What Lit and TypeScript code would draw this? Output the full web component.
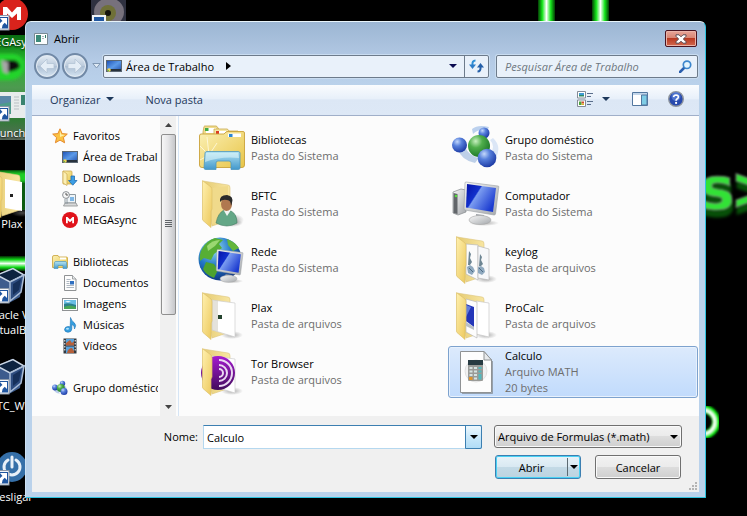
import { LitElement, html, svg, css } from "lit";
import { customElement } from "lit/decorators.js";
import { classMap } from "lit/directives/class-map.js";

/* ---------- shared gradients ---------- */
const defs = svg`<defs>
  <linearGradient id="fold" x1="0" y1="0" x2="1" y2="1"><stop offset="0" stop-color="#fff0ae"/><stop offset="1" stop-color="#ecc85c"/></linearGradient>
  <linearGradient id="back" x1="0" y1="0" x2="1" y2="0"><stop offset="0" stop-color="#e5cb72"/><stop offset="1" stop-color="#f8e6a2"/></linearGradient>
  <linearGradient id="lib" x1="0" y1="0" x2="1" y2="1"><stop offset="0" stop-color="#fbf0b4"/><stop offset="1" stop-color="#e8c548"/></linearGradient>
  <linearGradient id="aqua" x1="0" y1="0" x2="0" y2="1"><stop offset="0" stop-color="#b5e4f2"/><stop offset="1" stop-color="#4298cc"/></linearGradient>
  <linearGradient id="screen" x1="0" y1="0" x2="1" y2=".6"><stop offset="0" stop-color="#0512a8"/><stop offset=".4" stop-color="#1230cc"/><stop offset=".44" stop-color="#7b9cf0"/><stop offset="1" stop-color="#1b3bd0"/></linearGradient>
  <linearGradient id="metal" x1="0" y1="0" x2="1" y2="1"><stop offset="0" stop-color="#f8f8f8"/><stop offset="1" stop-color="#a4a8ac"/></linearGradient>
  <radialGradient id="blue" cx=".35" cy=".28" r=".75"><stop offset="0" stop-color="#c3d8fb"/><stop offset=".4" stop-color="#5780dc"/><stop offset="1" stop-color="#1c3aa4"/></radialGradient>
  <radialGradient id="green" cx=".35" cy=".28" r=".75"><stop offset="0" stop-color="#c8f0c0"/><stop offset=".4" stop-color="#4fae4b"/><stop offset="1" stop-color="#1c7628"/></radialGradient>
  <radialGradient id="sea" cx=".35" cy=".25" r=".8"><stop offset="0" stop-color="#9fe3f8"/><stop offset=".5" stop-color="#2479c8"/><stop offset="1" stop-color="#0c2f7c"/></radialGradient>
  <radialGradient id="shade"><stop offset="0" stop-color="#777" stop-opacity=".6"/><stop offset="1" stop-color="#777" stop-opacity="0"/></radialGradient>
  <linearGradient id="tor" x1="0" y1="0" x2="0" y2="1"><stop offset="0" stop-color="#a51bd0"/><stop offset="1" stop-color="#420b5c"/></linearGradient>
  <linearGradient id="desk" x1="0" y1="0" x2="1" y2="1"><stop offset="0" stop-color="#1c4fb4"/><stop offset=".5" stop-color="#5b9ae8"/><stop offset="1" stop-color="#1d4aa8"/></linearGradient>
</defs>`;

const openFolder = (inside: unknown) => svg`
  <ellipse cx="34" cy="43" rx="11" ry="4" fill="url(#shade)"/>
  <path d="M5 1 L30 5 Q32 5 32 8 V40 L14 46Z" fill="url(#back)" stroke="#dcc57c" stroke-width=".6"/>
  ${inside}
  <path d="M4.500 .6 L13 7 Q14 8 14 10 V29 L13 31 V47.500 L5 40.500 Q4.500 40 4.500 39Z" fill="url(#fold)" stroke="#dcc069" stroke-width=".7"/>`;

const whiteSheet = svg`<path d="M14 8 L37 11 V45 L14 38Z" fill="#fff" stroke="#cfcfcf" stroke-width=".7"/>
  <path d="M14 8.500 h6 v31 l-6-1.500z" fill="#c9c5b8" opacity=".5"/>`;

const monitor = svg`
  <ellipse cx="32" cy="43" rx="15" ry="3" fill="url(#shade)"/>
  <path d="M24 34 l8 1 1 5 h-9z" fill="#9fa4a9"/>
  <ellipse cx="28" cy="40" rx="11" ry="4.500" fill="url(#metal)" stroke="#a6a6a6" stroke-width=".6"/>
  <path d="M14 2 L46 6 Q47 6 46.800 7 L43.500 34 Q43.300 35 42 35 L13 30 Q12 30 12 28 L13 3 Q13 2 14 2Z" fill="url(#metal)" stroke="#9b9fa3" stroke-width=".6"/>
  <path d="M15 4 L44 8 L41 32 L14 27.500Z" fill="url(#screen)"/>`;

const big: Record<string, unknown> = {
  libraries: svg`
    <path d="M5 8 L6 2.500 Q6.300 2 7 2 H18 Q19 2 20 4 L22 7 H40 V20 H5Z" fill="#f1dc8e" stroke="#c9a94c" stroke-width=".8"/>
    <path d="M8 4 h10 v5 h-10z" fill="#fff"/><path d="M7 4 h3.500 v3 h-3.500z" fill="#42ab43"/>
    <path d="M16 5 H29 Q30 5 31 7 L33 9 H45 V20 H16Z" fill="#f6e6a5" stroke="#c9a94c" stroke-width=".8"/>
    <rect x="18" y="7" width="10" height="5" fill="#fff"/><rect x="18" y="7" width="3" height="3" fill="#dc3b22"/>
    <path d="M1.500 12 Q1.500 10 3 10 H26 L28 8 Q29 7.500 30 7.500 H45 Q46.500 7.500 46.500 9 V41 Q46.500 43.500 44 43.500 H4 Q1.500 43.500 1.500 41Z" fill="url(#lib)" stroke="#c9a23a" stroke-width=".9"/>
    <rect x="30" y="9.500" width="13" height="3.500" fill="#fff"/><rect x="31" y="10" width="3.500" height="3" fill="#2b86d4"/>
    <path d="M11 31 L2 22 M11 31 L9 13 M11 31 L19 19 M11 31 L2 36" stroke="#fffbe4" stroke-width=".8"/>
    <path d="M7 29 Q7 27.500 9 27.500 H40 Q42 27.500 42 29 V44 Q42 45.500 40 45.500 H33 V39 Q33 37 31 37 H20 Q18 37 18 39 V45.500 H8 Q6 45.500 6 44Z" fill="url(#aqua)" stroke="#4c97bf" stroke-width=".8"/>
    <path d="M8 29 h32 l1 5 q-18-2-34 4z" fill="#e2f7fc" opacity=".55"/>`,
  user: openFolder(svg`
    <path d="M14 8 L30 6 V39 L14 44Z" fill="#f0da8b"/>
    <ellipse cx="36" cy="40" rx="10" ry="6" fill="url(#shade)"/>
    <path d="M18 43 Q20 33 26 30 L33 31 Q39 34 39 43 Q29 49 18 43Z" fill="#64a787" stroke="#3f7a60" stroke-width=".6"/>
    <path d="M25 29 l4 7 4-6z" fill="#f4f4f4"/>
    <ellipse cx="28.500" cy="24" rx="5.500" ry="7" fill="#b0784f"/>
    <path d="M22 22 Q21 15 29 15 Q36 16 34 23 L33 26 Q33 20 29 20 Q24 19 22 22Z" fill="#2b2b2b"/>`),
  network: svg`
    <circle cx="22" cy="23" r="21.500" fill="url(#sea)"/>
    <path d="M4 13 Q8 5 17 2 L25 4 L21 8 L24 12 L16 18 L13 24 L6 22 L2 25 Q1 18 4 13Z" fill="#57ae35"/>
    <path d="M8 26 L16 28 L20 34 L16 42 Q8 39 5 33Z" fill="#4da22e"/>
    <path d="M29 3 Q37 6 41 12 L35 15 L30 9Z" fill="#63b63c"/>
    <path d="M9 10 Q14 4 22 4 L17 10 L10 15Z" fill="#c8f49a" opacity=".6"/>
    <g transform="translate(9 12) scale(.77)">${monitor}</g>`,
  plain: openFolder(svg`${whiteSheet}<rect x="20" y="23" width="4" height="4" fill="#24442e"/>`),
  tor: openFolder(svg`${whiteSheet}
    <circle cx="20" cy="25" r="17" fill="url(#tor)"/>
    <g fill="none" stroke="#ead9f2" stroke-width="2"><path d="M21 12 a13 13 0 0 1 0 26"/><path d="M21 17 a8 8 0 0 1 0 16"/><path d="M21 21 a4 4 0 0 1 0 8"/></g>`),
  homegroup: svg`
    <path d="M20 5 Q26 0 37 3 L35 7 Q27 4 21 10Z" fill="#bcd1ee"/>
    <path d="M41 14 Q50 22 44 34 L38 31 Q44 22 38 16Z" fill="#dbe6f6"/>
    <path d="M6 25 Q9 36 23 39 L27 34 Q17 32 13 23Z" fill="#a9c1e2" opacity=".75"/>
    <circle cx="32" cy="9" r="5.500" fill="url(#blue)"/>
    <circle cx="7.500" cy="21" r="7.500" fill="url(#blue)"/>
    <circle cx="27" cy="22" r="11" fill="url(#green)"/>
    <circle cx="35" cy="34" r="9.300" fill="url(#blue)"/>`,
  computer: svg`
    <path d="M1 12 L9 9 L14 10 V32 L6 35 L1 33Z" fill="url(#metal)" stroke="#85898d" stroke-width=".7"/>
    <path d="M1.500 13 L5.500 14 V34 L1.500 33Z" fill="#62666a"/><circle cx="4" cy="16" r="1.300" fill="#57e03c"/>
    ${monitor}`,
  pages: openFolder(svg`
    <path d="M14 8 L26 9 V44 L14 38Z" fill="#fbfbfb" stroke="#b9b9b9" stroke-width=".7"/>
    <path d="M26 10 L37 13 V44 L26 42Z" fill="#f7f8fa" stroke="#b9b9b9" stroke-width=".7"/>
    <path d="M17 15 l2 3 -1 4 2 4 -2 3 h-2z M28 18 l2 3 -1 3 2 4 -2 2 h-2z" fill="#6d8593"/>
    <path d="M15 31 l3-2 3 2 2 4 -3 4 -4-2z M26 31 l3-1 3 2 1 4 -3 3 -4-2z" fill="#8fa9bf"/>
    <path d="M17 32 l4 4 M27 32 l4 4" stroke="#4d6a82"/>`),
  calc: openFolder(svg`
    <path d="M24 9 L37 11 V45 L24 42Z" fill="#fff" stroke="#c9c9c9" stroke-width=".7"/>
    <path d="M14 7 L25 10 V46 L14 40Z" fill="#fdfdfd" stroke="#b9b9b9" stroke-width=".7"/>
    <path d="M14 12 L22 15 V35 L14 29Z" fill="#2436b8"/><path d="M14 13 L19 15 L14 25Z" fill="#7f9bea" opacity=".7"/><path d="M14 30 l8 5 v3 l-8-4z" fill="#b9bfc6"/>`),
  file: svg`
    <path d="M8.500 3.500 H32 L39.500 12 V44.500 H8.500Z" fill="#fdfdfd" stroke="#8f9294"/>
    <path d="M10 45.500 H40.500 V13" fill="none" stroke="#7d848b" opacity=".7"/>
    <path d="M32 3.500 V12 H39.500Z" fill="#e7eaec" stroke="#8f9294"/>
    <circle cx="24" cy="23" r="11" fill="#f2f2f2" stroke="#dcdcdc" stroke-width=".8"/>
    <rect x="16" y="13" width="15" height="20" rx="1" fill="#9a9b98"/>
    <rect x="16" y="12" width="15" height="5" fill="#283b42"/>
    <g fill="#d7e3e2"><path d="M17.500 19h3v2h-3z M22 19h3v2h-3z M17.500 22.500h3v2h-3z M22 22.500h3v2h-3z M17.500 26h3v2h-3z M22 26h3v2h-3z M22 29.500h3v2h-3z"/></g>
    <path d="M26.500 19h3v2h-3z M26.500 22.500h3v2h-3z M26.500 26h3v5.500h-3z" fill="#53b9bd"/>
    <rect x="17" y="29" width="3.500" height="3" fill="#e0952c"/>`,
};

const small: Record<string, unknown> = {
  star: svg`<path d="M8 .8 L10.100 5.600 L15.300 6.100 L11.400 9.600 L12.600 14.800 L8 12.100 L3.400 14.800 L4.600 9.600 L.7 6.100 L5.900 5.600Z" fill="#fbc343" stroke="#e58a2e" stroke-width="1"/><path d="M8 3 L9.200 6.500 L13 7 L8 9Z" fill="#fff0a8"/>`,
  desktop: svg`<rect x=".5" y="2.500" width="15" height="11" fill="url(#desk)" stroke="#5b6773"/><path d="M1 11h14v2h-14z" fill="#27323d"/><circle cx="3" cy="12" r="1.800" fill="#f0d458"/><path d="M1.500 12h1.500v1.500z" fill="#45c04b"/>`,
  downloads: svg`<path d="M1 1 H9 Q10 1 10 2 V14 H1Z" fill="url(#lib)" stroke="#cda94f" stroke-width=".8"/><path d="M1 1 L5 4 V15.500 L1 13Z" fill="#fbefb4" stroke="#cda94f" stroke-width=".7"/><path d="M9 6 H12.500 V10.500 H15 L10.800 15.200 L6.500 10.500 H9Z" fill="#3c9ee4" stroke="#1f6db4" stroke-width=".8"/>`,
  recent: svg`<path d="M5 3.500 H13.500 V12 H5Z" fill="#eef4f8" stroke="#8d989f"/><path d="M8 6h4v4h-4z" fill="#7db6e6"/><path d="M3 12 H14 L15.500 15 H1.500Z" fill="#d7d9da" stroke="#8d8f91" stroke-width=".8"/><path d="M3 8 v4 h3" fill="none" stroke="#8d989f"/><circle cx="4" cy="4" r="3.400" fill="#f7f7f7" stroke="#8b8f94"/><path d="M4 2v2h2" fill="none" stroke="#555"/>`,
  mega: svg`<circle cx="8" cy="8" r="8" fill="#e0131b"/><path d="M4 11.200 V5 H5.500 L8 7.600 L10.500 5 H12 V11.200 H10.200 V8.200 L8 10.300 L5.800 8.200 V11.200Z" fill="#fff"/>`,
  library: svg`<path d="M.5 3 Q.5 1.500 2 1.500 H6 L7 3 H14.500 Q15.500 3 15.500 4 V13.500 H.5Z" fill="url(#lib)" stroke="#c9a23a" stroke-width=".8"/><path d="M8 3.500h6v2h-6z" fill="#fff"/><path d="M2.500 8.500 Q2.500 7.500 4 7.500 H13 Q14.500 7.500 14.500 8.500 L15 14.500 H11 V11.500 H6 V14.500 H2Z" fill="url(#aqua)" stroke="#4c97bf" stroke-width=".7"/>`,
  documents: svg`<path d="M2.500 .5 H10.500 L14 4 V15.500 H2.500Z" fill="#fdfdfd" stroke="#8f9294"/><path d="M10.500 .5 V4 H14" fill="#e6e9eb" stroke="#8f9294" stroke-width=".8"/><path d="M4.500 4.500h4M4.500 6.500h3M4.500 8.500h3M4.500 10.500h7.500M4.500 12.500h7.500" stroke="#9aa6b2" stroke-width=".8"/><path d="M8 6h4v3.500h-4z" fill="#2f6fc0"/>`,
  pictures: svg`<rect x=".5" y="2.500" width="15" height="12" fill="#fff" stroke="#8f9294"/><path d="M2 4h12v9h-12z" fill="#69bde4"/><path d="M2 8 q4 -2 12 1 v4 h-12z" fill="#2c7f8c"/><path d="M2 11 q6-3 12 0 v2 h-12z" fill="#49a657"/><path d="M3 5h6l-3 1.500z" fill="#e9f7fd"/>`,
  music: svg`<path d="M8.500 .5 Q9.500 4 12 5.500 Q15 8 12.500 12 Q13 8.500 9.800 7.500 V12 Q9.500 15.300 6 15.300 Q2.500 15 2.500 12.500 Q3 9.500 6 9.500 Q7.500 9.400 8.200 10Z" fill="#359ede" stroke="#1c74b6" stroke-width=".6"/><ellipse cx="5.500" cy="11.800" rx="1.500" ry="1" fill="#b4e2fa"/>`,
  videos: svg`<path d="M1.500 .5h13v15h-13z" fill="#333a40"/><path d="M4 1h8v6.500h-8z M4 8.500h8v6.500h-8z" fill="#57a2dc"/><path d="M4 5 l4-3 2 3 2-2 v4.500h-8z M5 15 q1-5 5-5 l2 3 v2z" fill="#b5603a"/><path d="M2.300 2h1v1.500h-1z M2.300 5h1v1.500h-1z M2.300 8h1v1.500h-1z M2.300 11h1v1.500h-1z M12.700 2h1v1.500h-1z M12.700 5h1v1.500h-1z M12.700 8h1v1.500h-1z M12.700 11h1v1.500h-1z" fill="#fff"/>`,
  group: svg`<path d="M1 9 Q4 14 8 13.500 L4 8Z M12 5 q4 3 2.500 7l-3-2z" fill="#b9cdea"/><circle cx="10.500" cy="3.500" r="2.700" fill="url(#blue)"/><circle cx="3" cy="7.500" r="2.900" fill="url(#blue)"/><circle cx="8.800" cy="8" r="4" fill="url(#green)"/><circle cx="12" cy="11.500" r="3.500" fill="url(#blue)"/>`,
};

const arrowBadge = svg`<rect x="7.500" y="27.500" width="13.500" height="14.500" fill="#f3f6fa" stroke="#8b98a8"/>
  <path d="M9 29h11v11.500h-11z" fill="#1f559f"/><path d="M12 30 h7 v7 l-2.300-2.300 q-3 2-2.700 5.800 h-3.500 q0-5 4-7.500z" fill="#fff"/>`;
const cube = svg`<path d="M24 7 L35 13 L32 36 L21 42 L10 33 L9 14Z" fill="#3d5c8d"/>
  <path d="M9 14 L25 7.500 L36 14 L22 21Z" fill="#0d2340" stroke="#cbd7e6" stroke-width="1.500"/>
  <path d="M22 21 L36 14 L33 31 L22 40Z" fill="#2e4d80" stroke="#a9bcd6" stroke-width="1.500"/>
  <path d="M25 23 L33 18 L31 29 L25 34Z" fill="#16305a"/>`;

const desktop: Record<string, unknown> = {
  mega: svg`<circle cx="24" cy="26" r="16" fill="#d9231c"/><path d="M15 32 V19 H19 L24 24.500 L29 19 H33 V32 H29 V25.500 L24 30 L19 25.500 V32Z" fill="#fff"/>${arrowBadge}`,
  launch: svg`<rect x="0" y="13" width="48" height="26" fill="#e8ecec"/><rect x="2" y="17" width="21" height="18" fill="#4d9b8b"/><path d="M2 17h21v6l-21 4z" fill="#5a88a8"/><path d="M26 18h5M26 21h5M26 24h5M26 27h5M26 30h5" stroke="#b9c0c4"/><rect x="33" y="16" width="10" height="10" fill="#39836f"/>${arrowBadge}`,
  folder: svg`${openFolder(svg`<path d="M17 9 L34 12 V41 L17 38Z" fill="#fff"/><rect x="22" y="24" width="3" height="3" fill="#222"/>`)}`,
  vbox: svg`${cube}${arrowBadge}`,
  power: svg`<circle cx="24" cy="24" r="15" fill="#356fa8"/><path d="M20 17 a8 8 0 1 0 8 0 M24 14 v10" fill="none" stroke="#e8f0f8" stroke-width="3" stroke-linecap="round"/>${arrowBadge}`,
};

const shortcuts = [
  ["mega", "MEGAsync"],
  ["launch", "Launcher"],
  ["folder", "Plax"],
  ["vbox", "Oracle VM VirtualBox"],
  ["vbox", "BTC_Win"],
  ["power", "Desligar"],
];

const places = [
  { title: "Favoritos", icon: "star", items: [["desktop", "Área de Trabalho"], ["downloads", "Downloads"], ["recent", "Locais"], ["mega", "MEGAsync"]] },
  { title: "Bibliotecas", icon: "library", items: [["documents", "Documentos"], ["pictures", "Imagens"], ["music", "Músicas"], ["videos", "Vídeos"]] },
  { title: "Grupo doméstico", icon: "group", items: [] as string[][] },
];

const files = [
  ["libraries", "Bibliotecas", "Pasta do Sistema"],
  ["homegroup", "Grupo doméstico", "Pasta do Sistema"],
  ["user", "BFTC", "Pasta do Sistema"],
  ["computer", "Computador", "Pasta do Sistema"],
  ["network", "Rede", "Pasta do Sistema"],
  ["pages", "keylog", "Pasta de arquivos"],
  ["plain", "Plax", "Pasta de arquivos"],
  ["calc", "ProCalc", "Pasta de arquivos"],
  ["tor", "Tor Browser", "Pasta de arquivos"],
  ["file", "Calculo", "Arquivo MATH", "20 bytes"],
];

const caret = html`<svg class="caret" viewBox="0 0 8 4" width="8" height="4" aria-hidden="true"><path d="M0 0h8l-4 4z" fill="currentColor"/></svg>`;
const icon = (art: unknown, size: number) =>
  html`<svg class="icon" viewBox="0 0 ${size} ${size}" width=${size} height=${size} aria-hidden="true">${defs}${art}</svg>`;

@customElement("desktop-wallpaper")
class DesktopWallpaper extends LitElement {
  static styles = css`
    :host { position: absolute; inset: 0; display: flex; justify-content: space-between; overflow: hidden; background: #000; }
    svg { display: block; flex: none; }
    .glyphs { font: bold 58px "DejaVu Sans", sans-serif; filter: blur(1px) drop-shadow(1px 7px 1px #075008); }
  `;
  render() {
    return html`
      <svg width="130" height="516" viewBox="0 0 130 516" aria-hidden="true">
        <defs>
          <linearGradient id="beam" x1="0" y1="0" x2="0" y2="1"><stop offset="0" stop-color="#022b04"/><stop offset=".25" stop-color="#12dc18"/><stop offset=".5" stop-color="#f0fff0"/><stop offset=".75" stop-color="#12dc18"/><stop offset="1" stop-color="#022b04"/></linearGradient>
          <linearGradient id="slab" x1="0" y1="0" x2="0" y2="1"><stop offset="0" stop-color="#0a6a12"/><stop offset=".25" stop-color="#26b82c"/><stop offset=".5" stop-color="#4d9a50"/><stop offset=".8" stop-color="#2f7c34"/><stop offset="1" stop-color="#5b6a5c"/></linearGradient>
          <filter id="soft"><feGaussianBlur stdDeviation="1.500"/></filter>
        </defs>
        <rect x="-4" y="35" width="34" height="105" fill="url(#slab)"/>
        <g filter="url(#soft)"><path d="M-4 54 H14 Q24 56 24 67 Q22 80 8 80 H-4Z" fill="#22d42a"/><path d="M4 60 H14 Q20 62 20 67 Q17 71 7 72Z" fill="#0a0a0a"/><path d="M1 60 L8 62 L8 74 L3 72Z" fill="#a8a8a8"/></g>
        <rect x="-4" y="170" width="34" height="40" fill="#0a5c10"/>
        <rect x="-4" y="172" width="34" height="10" fill="#1fcf26" filter="url(#soft)"/>
        <rect x="-4" y="256" width="34" height="15" fill="url(#beam)"/>
        <rect x="91" y="0" width="35" height="22" fill="#2f3140"/>
        <ellipse cx="109" cy="12" rx="15" ry="14" fill="#77717c"/><circle cx="108" cy="13" r="8" fill="#6f7038"/><circle cx="108" cy="13" r="3" fill="#15150f"/>
        <rect x="92" y="15" width="14" height="8" fill="#f0f4f8"/><path d="M94 17h10v6h-10z" fill="#1f559f"/>
      </svg>
      <svg width="217" height="516" viewBox="530 0 217 516" aria-hidden="true">
        <defs>
          <linearGradient id="ray"><stop offset="0" stop-color="#033c04"/><stop offset=".25" stop-color="#14e61a"/><stop offset=".5" stop-color="#fff"/><stop offset=".75" stop-color="#14e61a"/><stop offset="1" stop-color="#033c04"/></linearGradient>
          <filter id="blur"><feGaussianBlur stdDeviation="1"/></filter>
        </defs>
        <rect x="538" y="0" width="17" height="26" fill="url(#ray)"/>
        <rect x="592" y="0" width="17" height="26" fill="url(#ray)"/>
        <text class="glyphs" x="700 730" y="209" fill="#32e236" stroke="#7c8c7c" stroke-width="1">s&gt;</text>
        <g fill="none" filter="url(#blur)"><circle cx="703" cy="422" r="13" stroke="#12ec14" stroke-width="8"/><circle cx="703" cy="422" r="12" stroke="#fff" stroke-width="3"/></g>
      </svg>`;
  }
}

@customElement("open-dialog")
class OpenDialog extends LitElement {
  static styles = css`
    * { box-sizing: border-box; }
    :host { display: flex; flex-direction: column; border: 1px solid #2fc4e0; border-top-color: #e8f4fa; border-left-color: #cfe2f4; border-radius: 6px 6px 1px 1px;
      background: linear-gradient(#9cb6d3, #b5cbe6 40px, #bad2eb 64px, #bad2eb); padding: 0 6px 5px; color: #000; }
    svg { display: block; flex: none; }
    button { font: inherit; color: inherit; margin: 0; padding: 0; border: 0; background: none; display: flex; align-items: center; justify-content: center; }
    input, select { font: inherit; color: inherit; margin: 0; outline: none; }
    .title { display: flex; align-items: center; height: 33px; gap: 6px; padding: 0 2px; }
    .title h1 { flex: 1; margin: 0; font: inherit; }
    .close { width: 32px; height: 17px; border: 1px solid #4a1420; border-radius: 2px; background: linear-gradient(#e8a598, #d78472 48%, #b93a22 50%, #d2694f); box-shadow: inset 0 0 0 1px #eab3a8; }
    .nav { display: flex; align-items: center; height: 22px; margin-bottom: 8px; }
    .history { display: flex; gap: 2px; padding: 0 1px 0 2px; }
    .round { width: 26px; height: 26px; border: 2px solid #7189a6; border-radius: 50%; background: linear-gradient(#e5edf5, #bccbdc 48%, #aabdd2 50%, #d5e4f2); box-shadow: inset 0 0 0 1px #e2eaf2; }
    .pages { width: 14px; height: 20px; color: #f0f6fc; }
    .box { display: flex; align-items: center; height: 23px; border: 1px solid #6d7b8b; border-radius: 2px; background: #e9f1fa; box-shadow: 0 0 0 1px #c9dcf0; }
    .address { flex: 384; min-width: 0; }
    .address .icon { margin: 0 4px 0 2px; }
    .address .next { margin-left: 12px; }
    .drop { margin-left: auto; width: 22px; height: 21px; color: #0a0a50; }
    .refresh { width: 24px; height: 21px; border-left: 1px solid #6d7b8b; }
    .search { flex: 187; min-width: 0; margin: 0 1px 0 7px; padding: 0 5px 0 8px; }
    .search input { flex: 1; min-width: 0; border: 0; background: none; padding: 0; }
    .search input::placeholder { color: #6e7780; font-style: italic; opacity: 1; }
    .tools { display: flex; align-items: center; height: 31px; padding: 0 15px 2px 18px; border-bottom: 1px solid #a0afc9; background: linear-gradient(#fafcfe, #e8f0fa 45%, #dce7f5 50%, #dde8f6); color: #1e395b; }
    .tools .organize { gap: 6px; margin-right: 31px; }
    .tools .views { margin-left: auto; gap: 9px; margin-right: 22px; }
    .tools .preview { margin-right: 20px; }
    .main { flex: 1; display: grid; grid-template-columns: 147px 1fr; background: #fcfcfc; }
    .places { display: flex; border-right: 1px solid #d6e5f5; min-width: 0; }
    .tree { flex: 1; min-width: 0; overflow: hidden; margin-right: 2px; padding: 9px 0 0 20px; }
    .tree ul { list-style: none; margin: 0 0 21px; padding: 0 0 0 10px; }
    .tree a, .tree h2 { display: flex; align-items: center; gap: 5px; height: 21px; margin: 0; font: inherit; color: #000; text-decoration: none; white-space: nowrap; }
    .bar { width: 16px; margin-right: 2px; background: #f0f0f0; display: flex; flex-direction: column; align-items: center; color: #444; }
    .bar button { width: 16px; height: 18px; }
    .thumb { width: 15px; flex: 181; border: 1px solid #8f8f8f; border-radius: 2px; background: linear-gradient(90deg, #f6f6f6, #e6e6e8 45%, #c6c7ca); display: grid; place-items: center; }
    .track { flex: 84; }
    .files { list-style: none; display: grid; grid-template-columns: 1fr 1fr; align-content: start; gap: 4px; margin: 0; padding: 6px 1px 0 15px; }
    .file { display: flex; align-items: center; height: 52px; padding: 0 3px; gap: 5px; border: 1px solid transparent; border-radius: 3px; line-height: 16px; min-width: 0; }
    .file.selected { border-color: #7da2ce; background: linear-gradient(#dceafc, #c1dbfc); box-shadow: inset 0 0 0 1px #e7f1fd; }
    .kind { color: #6d6d6d; }
    .foot { display: grid; grid-template-columns: 171px 1fr 217px; row-gap: 6px; background: #f0f0f0; height: 76px; padding: 9px 0 0; align-content: start; position: relative; }
    .foot label { text-align: right; padding-right: 5px; line-height: 23px; }
    .name { display: flex; height: 24px; background: #fff; border: 1px solid #b5d8ef; border-top-color: #3c7fb1; }
    .name input { flex: 1; min-width: 0; border: 0; padding: 0 3px; background: none; }
    .name button { width: 17px; border: 1px solid #3c7fb1; border-radius: 0 2px 2px 0; background: linear-gradient(#eef8fd, #c9e8fa 50%, #b0dcf6); margin: -1px; height: 24px; }
    .type { position: relative; margin: 0 17px 0 0; }
    .type select { appearance: none; width: 100%; height: 23px; padding: 0 20px 0 3px; }
    .type .caret { position: absolute; right: 4px; top: 10px; pointer-events: none; }
    .grey { border: 1px solid #707070; border-radius: 3px; background: linear-gradient(#f2f2f2, #ebebeb 48%, #dddddd 50%, #cfcfcf); box-shadow: inset 0 0 0 1px #fafafa; }
    .type, .actions { margin-left: 12px; }
    .actions { grid-column: 3; display: flex; gap: 14px; margin-right: 18px; padding-left: 1px; }
    .actions > * { flex: 1; height: 24px; }
    .split { display: flex; border: 1px solid #3c7fb1; border-radius: 3px; background: linear-gradient(#e8f3f9, #d9e9f2 48%, #c3dae6 50%, #bcd3e0); box-shadow: inset 0 0 0 1px #48d1f4; }
    .split .ok { flex: 1; }
    .split .more { width: 13px; margin: 2px 0; border-left: 1px solid #5c6b73; }
    .grip { position: absolute; right: 2px; bottom: 2px; }
  `;
  render() {
    return html`
      <header class="title">
        <svg width="14" height="12" viewBox="0 0 14 12" aria-hidden="true"><path d="M.5.5h13v11h-13z" fill="#fbfdfd" stroke="#7b8b96"/><path d="M2 2h5v7h-5z" fill="#3c8a79"/><path d="M8 3h2v1h-2zM8 5h2v1h-2z" fill="#adb8bd"/><path d="M11 2h1v3h-1z" fill="#2f7d68"/></svg>
        <h1>Abrir</h1>
        <button class="close" aria-label="Fechar"><svg width="12" height="10" viewBox="0 0 12 10"><path d="M1 .8h3l2 2 2-2h3v1.500l-2.600 2.700 2.600 2.700v1.500h-3l-2-2-2 2h-3v-1.500l2.600-2.700-2.600-2.700z" fill="#fff" stroke="#5a4b52" stroke-width="1"/></svg></button>
      </header>
      <nav class="nav">
        <div class="history">
          <button class="round" aria-label="Voltar"><svg width="18" height="16" viewBox="0 0 18 16"><path d="M9 1 L2 8 L9 15 V10.500 H16 V5.500 H9Z" fill="#e4edf6" stroke="#b4c4d6" stroke-width=".8"/></svg></button>
          <button class="round" aria-label="Avançar"><svg width="18" height="16" viewBox="0 0 18 16"><path d="M9 1 L16 8 L9 15 V10.500 H2 V5.500 H9Z" fill="#e4edf6" stroke="#b4c4d6" stroke-width=".8"/></svg></button>
        </div>
        <button class="pages" aria-label="Páginas recentes"><svg width="9" height="6" viewBox="0 0 9 6"><path d="M.8.5h7.400l-3.700 4.500z" fill="#dfeaf5" stroke="#8097b2"/></svg></button>
        <div class="box address">
          ${icon(small.desktop, 16)}<span>Área de Trabalho</span>
          <svg class="next" width="5" height="8" viewBox="0 0 5 8" aria-hidden="true"><path d="M0 0v8l5-4z"/></svg>
          <button class="drop" aria-label="Locais anteriores">${caret}</button>
          <button class="refresh" aria-label="Atualizar"><svg width="15" height="14" viewBox="0 0 15 14"><path d="M6.500 1.500 Q3 1.500 3.500 6" fill="none" stroke="#2d8fd6" stroke-width="2"/><path d="M0 5.500h7l-3.500 4.500z" fill="#2d7dc8"/><path d="M8.500 12.500 Q12 12.500 11.500 8" fill="none" stroke="#245fa8" stroke-width="2"/><path d="M8 8.500h7l-3.500-4.500z" fill="#245fa8"/></svg></button>
        </div>
        <div class="box search">
          <input type="search" placeholder="Pesquisar Área de Trabalho" aria-label="Pesquisar Área de Trabalho" />
          <svg width="13" height="13" viewBox="0 0 13 13" aria-hidden="true"><path d="M1 12 L5 8" stroke="#2a5fae" stroke-width="2.500" stroke-linecap="round"/><circle cx="8" cy="4.800" r="3.700" fill="#e4f4fd" stroke="#3c86cc" stroke-width="1.700"/></svg>
        </div>
      </nav>
      <div class="tools">
        <button class="organize">Organizar ${caret}</button>
        <button>Nova pasta</button>
        <button class="views" aria-label="Modo de exibição">
          <svg width="16" height="16" viewBox="0 0 16 16"><path d="M.5.500h8v6.500h-8zM.5 9h8v6.500h-8z" fill="#fff" stroke="#848c96"/><path d="M2 2h5v2h-5z" fill="#3f9bd4"/><path d="M2 4h5v1.500h-5z" fill="#2b8a68"/><path d="M2 10.500h2.500v3.500h-2.500z" fill="#4aa53c"/><path d="M4.500 10.500h2.500v2h-2.500z" fill="#d04a34"/><path d="M4.500 12.500h2.500v1.500h-2.500z" fill="#d8b32c"/><path d="M10 2.500h6M10 5.500h4M10 10.500h6M10 13.500h4" stroke="#5b6f8c"/></svg>
          ${caret}
        </button>
        <button class="preview" aria-label="Painel de visualização"><svg width="16" height="14" viewBox="0 0 16 14"><path d="M.5.5h15v13h-15z" fill="#fff" stroke="#52779f"/><path d="M1 1h14v2h-14z" fill="#c3d6ea"/><path d="M9.500 3h5.500v10h-5.500z" fill="#7fcde6" stroke="#52779f"/></svg></button>
        <button aria-label="Ajuda"><svg width="16" height="16" viewBox="0 0 16 16"><circle cx="8" cy="8" r="7.300" fill="#2749ad" stroke="#8d949e" stroke-width="1.400"/><circle cx="8" cy="5.500" r="4.500" fill="#5e86dc" opacity=".7"/><path d="M5.600 6.200 Q5.800 4 8 4 Q10.400 4.100 10.400 6 Q10.300 7.200 9 7.900 Q8.100 8.500 8.100 9.700" fill="none" stroke="#fff" stroke-width="1.700"/><circle cx="8.100" cy="11.900" r="1.100" fill="#fff"/></svg></button>
      </div>
      <div class="main">
        <div class="places">
          <nav class="tree">
            ${places.map((p) => html`<h2>${icon(small[p.icon], 16)}<span>${p.title}</span></h2>
              ${p.items.length ? html`<ul>${p.items.map(([art, name]) => html`<li><a href="#">${icon(small[art], 16)}<span>${name}</span></a></li>`)}</ul>` : ""}`)}
          </nav>
          <div class="bar">
            <button aria-label="Rolar para cima"><svg width="7" height="4" viewBox="0 0 7 4"><path d="M0 4h7l-3.500-4z" fill="currentColor"/></svg></button>
            <div class="thumb"><svg width="7" height="8" viewBox="0 0 7 8"><path d="M0 .5h7M0 2.500h7M0 4.500h7M0 6.500h7" stroke="#606468"/></svg></div>
            <div class="track"></div>
            <button aria-label="Rolar para baixo"><svg width="7" height="4" viewBox="0 0 7 4"><path d="M0 0h7l-3.500 4z" fill="currentColor"/></svg></button>
          </div>
        </div>
        <ul class="files">
          ${files.map(([art, name, ...info]) => html`<li class=${classMap({ file: true, selected: name === "Calculo" })}>
            ${icon(big[art], 48)}
            <div><div>${name}</div>${info.map((line) => html`<div class="kind">${line}</div>`)}</div>
          </li>`)}
        </ul>
      </div>
      <footer class="foot">
        <label for="name">Nome:</label>
        <div class="name"><input id="name" type="text" value="Calculo" /><button aria-label="Nomes anteriores">${caret}</button></div>
        <div class="type"><select class="grey" aria-label="Tipo de arquivo"><option>Arquivo de Formulas (*.math)</option></select>${caret}</div>
        <div class="actions">
          <div class="split"><button class="ok">Abrir</button><button class="more" aria-label="Mais opções">${caret}</button></div>
          <button class="grey">Cancelar</button>
        </div>
        <svg class="grip" width="8" height="8" viewBox="0 0 8 8" aria-hidden="true"><path d="M6 0h2v2h-2zM3 3h2v2h-2zM6 3h2v2h-2zM0 6h2v2h-2zM3 6h2v2h-2zM6 6h2v2h-2z" fill="#b4b4b4"/></svg>
      </footer>`;
  }
}

@customElement("app-root")
class AppRoot extends LitElement {
  static styles = css`
    :host { display: flex; position: relative; min-height: 100vh; overflow: hidden; box-sizing: border-box; padding: 21px 41px 18px 25px; font: 11px/15px "Open Sans", "Noto Sans", sans-serif; }
    .shortcuts { position: absolute; left: -28px; top: -12px; width: 80px; list-style: none; margin: 0; padding: 0; }
    .shortcut { display: flex; flex-direction: column; align-items: center; height: 91px; color: #fff; text-align: center; text-shadow: 0 1px 2px #000; }
    .icon { display: block; flex: none; margin-bottom: -2px; }
    open-dialog { position: relative; flex: 1; min-width: 0; }
  `;
  render() {
    return html`
      <desktop-wallpaper></desktop-wallpaper>
      <ul class="shortcuts">
        ${shortcuts.map(([art, name]) => html`<li class="shortcut">${icon(desktop[art], 48)}<span>${name}</span></li>`)}
      </ul>
      <open-dialog></open-dialog>`;
  }
}
